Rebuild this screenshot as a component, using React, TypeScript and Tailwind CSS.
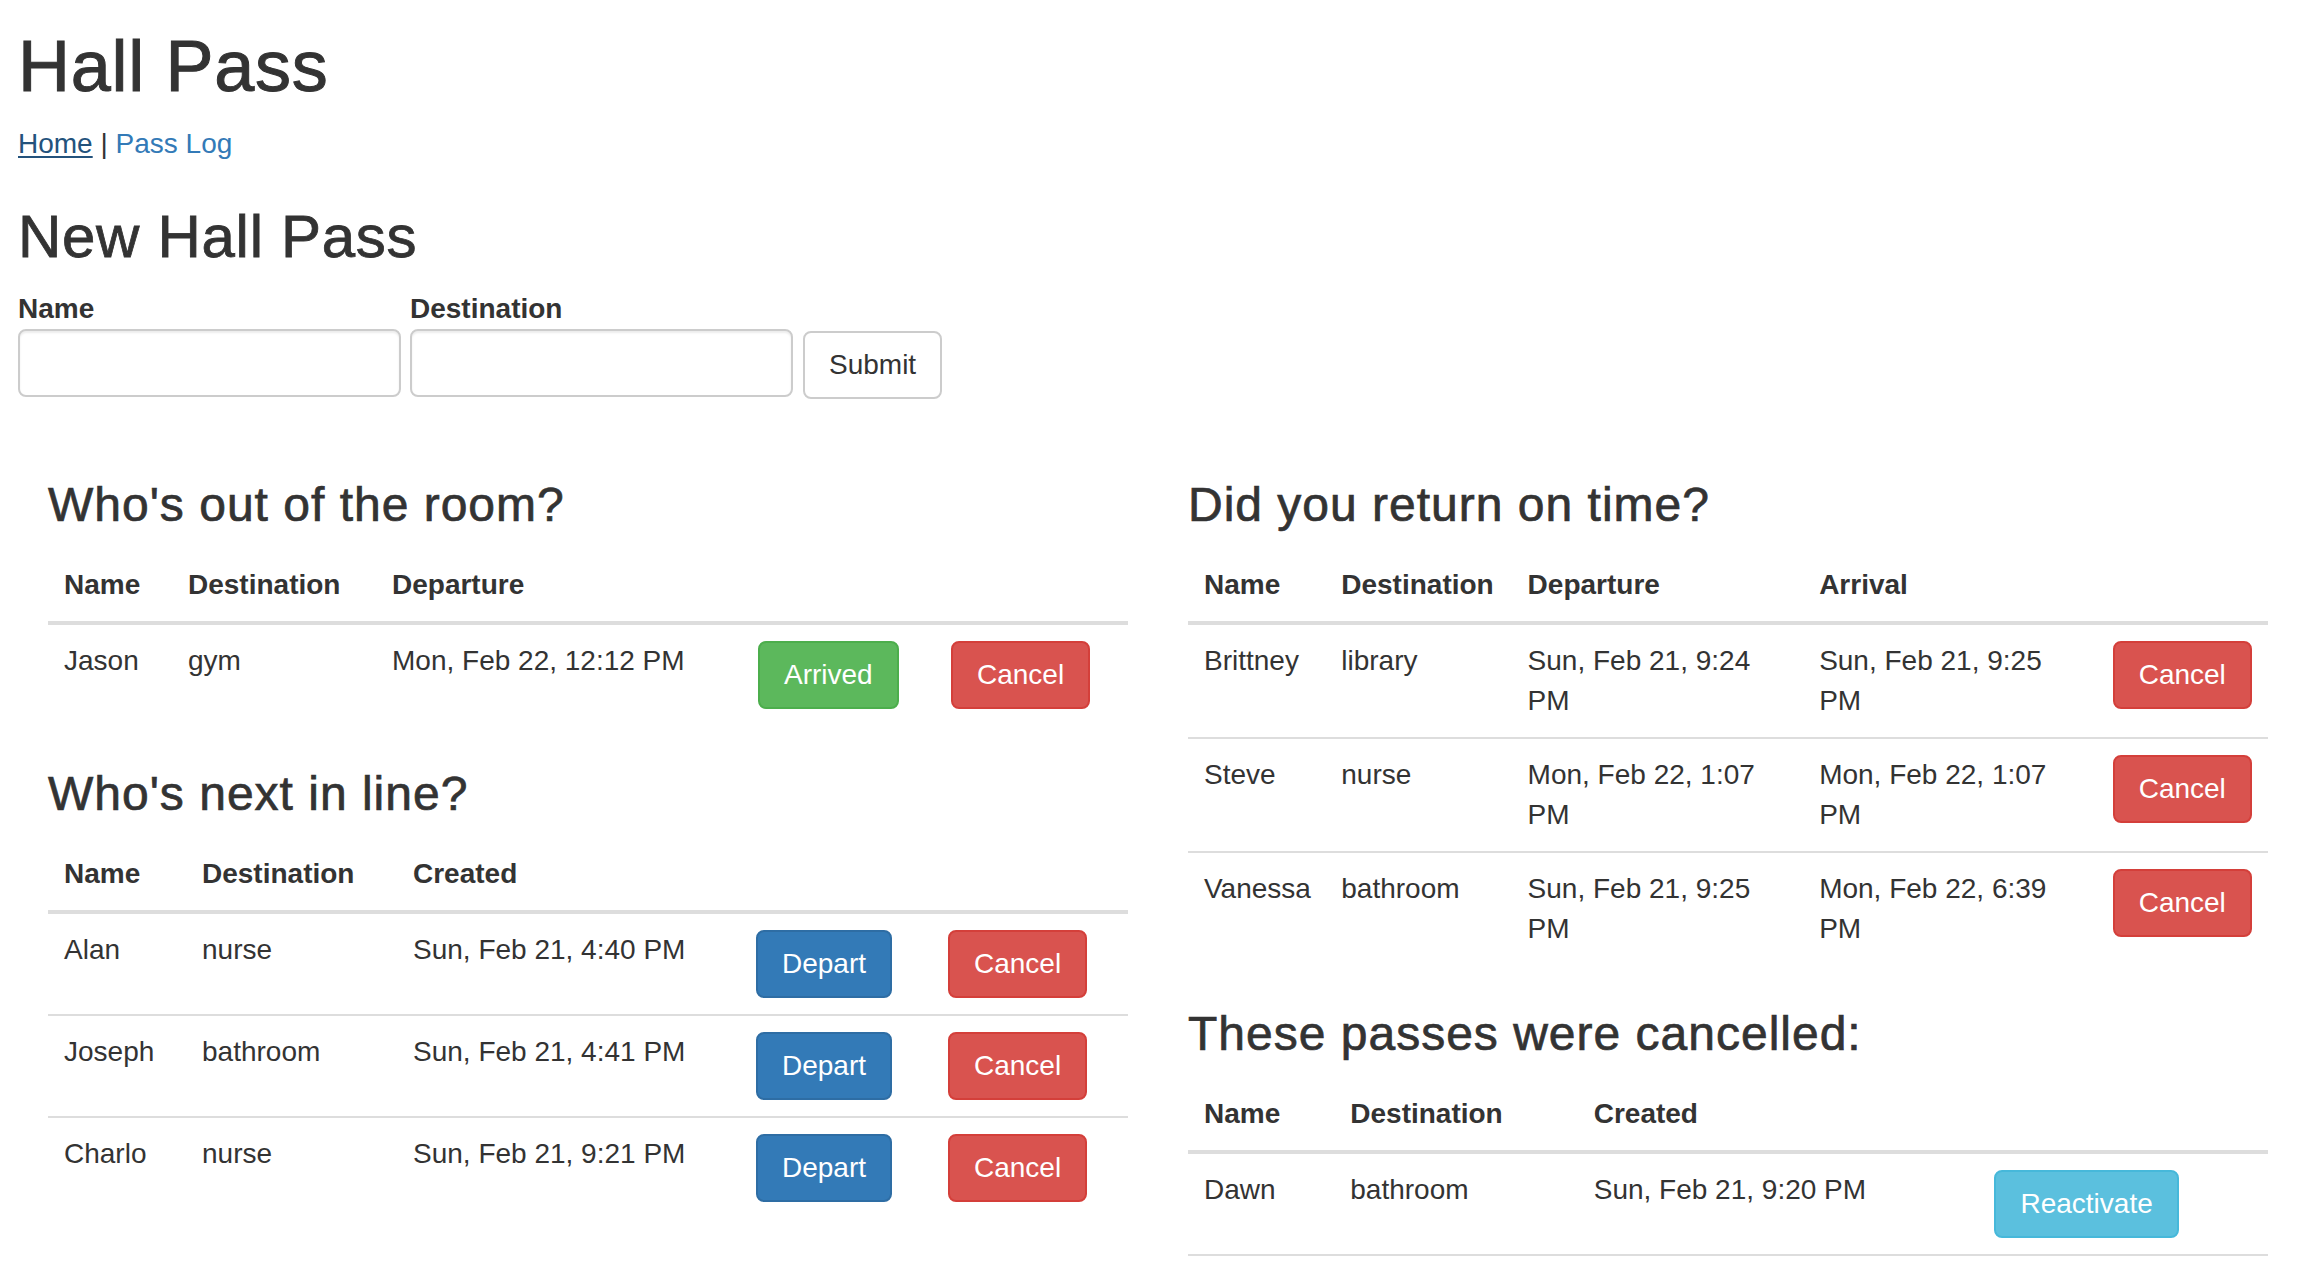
import React from "react";

type Variant = "success" | "danger" | "primary" | "info";

const variantCls: Record<Variant, string> = {
  success: "bg-[#5cb85c] border-[#4cae4c]",
  danger: "bg-[#d9534f] border-[#d43f3a]",
  primary: "bg-[#337ab7] border-[#2e6da4]",
  info: "bg-[#5bc0de] border-[#46b8da]",
};

function Btn({ variant, children }: { variant: Variant; children: React.ReactNode }) {
  return (
    <button
      type="button"
      className={`inline-block text-white text-[28px] leading-[40px] px-[24px] py-[12px] border-[2px] border-solid rounded-[8px] ${variantCls[variant]}`}
    >
      {children}
    </button>
  );
}

type TableProps = {
  cols: string[];
  headers: string[];
  rows: React.ReactNode[][];
  bottomLine?: boolean;
};

function DataTable({ cols, headers, rows, bottomLine }: TableProps) {
  return (
    <table className="w-full table-fixed border-collapse mb-[40px]">
      <colgroup>
        {cols.map((c, i) => (
          <col key={i} className={c} />
        ))}
      </colgroup>
      <thead>
        <tr>
          {headers.map((h, i) => (
            <th
              key={i}
              className="text-left font-bold px-[16px] py-[16px] leading-[40px] border-b-[4px] border-solid border-[#ddd] align-bottom"
            >
              {h}
            </th>
          ))}
        </tr>
      </thead>
      <tbody>
        {rows.map((r, ri) => (
          <tr key={ri}>
            {r.map((c, ci) => (
              <td
                key={ci}
                className={`px-[16px] py-[16px] leading-[40px] align-top border-t-[2px] border-solid border-[#ddd] ${
                  bottomLine && ri === rows.length - 1 ? "border-b-[2px]" : ""
                }`}
              >
                {c}
              </td>
            ))}
          </tr>
        ))}
      </tbody>
    </table>
  );
}

function H3({ children }: { children: React.ReactNode }) {
  return (
    <h3 className="mt-[40px] mb-[17px] pt-[3px] text-[48px] leading-[52.8px] font-medium tracking-[1px] [-webkit-text-stroke:0.7px_#333]">
      {children}
    </h3>
  );
}

export default function App() {
  return (
    <div className="min-h-screen bg-white text-[#333] text-[28px] leading-[40px] font-['Liberation_Sans',Arial,Helvetica,sans-serif]">
      <div className="px-[18px]">
        <h1 className="mt-[27px] mb-[18px] text-[72px] leading-[79.2px] font-medium tracking-[0.7px] [-webkit-text-stroke:1px_#333]">
          Hall Pass
        </h1>
        <div>
          <a href="#" className="text-[#23527c] underline decoration-2 underline-offset-[3px]">
            Home
          </a>{" "}
          |{" "}
          <a href="#" className="text-[#337ab7]">
            Pass Log
          </a>
        </div>
        <h2 className="mt-[40px] mb-[19px] text-[60px] leading-[66px] font-medium tracking-[0.7px] [-webkit-text-stroke:0.8px_#333]">
          New Hall Pass
        </h2>
        <form className="flex items-end gap-[9px]" onSubmit={(e) => e.preventDefault()}>
          <div className="flex flex-col">
            <label className="font-bold leading-[40px]">Name</label>
            <input
              type="text"
              className="w-[383px] h-[68px] border-[2px] border-solid border-[#ccc] rounded-[8px] px-[24px] shadow-[inset_0_2px_2px_rgba(0,0,0,0.075)] outline-none"
            />
          </div>
          <div className="flex flex-col">
            <label className="font-bold leading-[40px]">Destination</label>
            <input
              type="text"
              className="w-[383px] h-[68px] border-[2px] border-solid border-[#ccc] rounded-[8px] px-[24px] shadow-[inset_0_2px_2px_rgba(0,0,0,0.075)] outline-none"
            />
          </div>
          <button
            type="submit"
            className="mb-[-2px] ml-[1px] bg-white text-[#333] text-[28px] leading-[40px] px-[24px] py-[12px] border-[2px] border-solid border-[#ccc] rounded-[8px]"
          >
            Submit
          </button>
        </form>
      </div>

      <div className="ml-[18px] mt-[39px] grid grid-cols-[1140px_1140px]">
        <div className="px-[30px]">
          <H3>Who's out of the room?</H3>
          <DataTable
            cols={["w-[124px]", "w-[204px]", "w-[366px]", "w-[193px]", "w-[193px]"]}
            headers={["Name", "Destination", "Departure", "", ""]}
            rows={[
              [
                "Jason",
                "gym",
                "Mon, Feb 22, 12:12 PM",
                <Btn variant="success">Arrived</Btn>,
                <Btn variant="danger">Cancel</Btn>,
              ],
            ]}
          />
          <H3>Who's next in line?</H3>
          <DataTable
            cols={["w-[138px]", "w-[211px]", "w-[343px]", "w-[192px]", "w-[196px]"]}
            headers={["Name", "Destination", "Created", "", ""]}
            rows={[
              ["Alan", "nurse", "Sun, Feb 21, 4:40 PM", <Btn variant="primary">Depart</Btn>, <Btn variant="danger">Cancel</Btn>],
              ["Joseph", "bathroom", "Sun, Feb 21, 4:41 PM", <Btn variant="primary">Depart</Btn>, <Btn variant="danger">Cancel</Btn>],
              ["Charlo", "nurse", "Sun, Feb 21, 9:21 PM", <Btn variant="primary">Depart</Btn>, <Btn variant="danger">Cancel</Btn>],
            ]}
          />
        </div>
        <div className="px-[30px]">
          <H3>Did you return on time?</H3>
          <DataTable
            cols={["w-[137px]", "w-[186px]", "w-[291px]", "w-[293px]", "w-[171px]"]}
            headers={["Name", "Destination", "Departure", "Arrival", ""]}
            rows={[
              ["Brittney", "library", "Sun, Feb 21, 9:24 PM", "Sun, Feb 21, 9:25 PM", <Btn variant="danger">Cancel</Btn>],
              ["Steve", "nurse", "Mon, Feb 22, 1:07 PM", "Mon, Feb 22, 1:07 PM", <Btn variant="danger">Cancel</Btn>],
              ["Vanessa", "bathroom", "Sun, Feb 21, 9:25 PM", "Mon, Feb 22, 6:39 PM", <Btn variant="danger">Cancel</Btn>],
            ]}
          />
          <H3>These passes were cancelled:</H3>
          <DataTable
            bottomLine
            cols={["w-[146px]", "w-[243px]", "w-[400px]", "w-[289px]"]}
            headers={["Name", "Destination", "Created", ""]}
            rows={[["Dawn", "bathroom", "Sun, Feb 21, 9:20 PM", <Btn variant="info">Reactivate</Btn>]]}
          />
        </div>
      </div>
    </div>
  );
}
